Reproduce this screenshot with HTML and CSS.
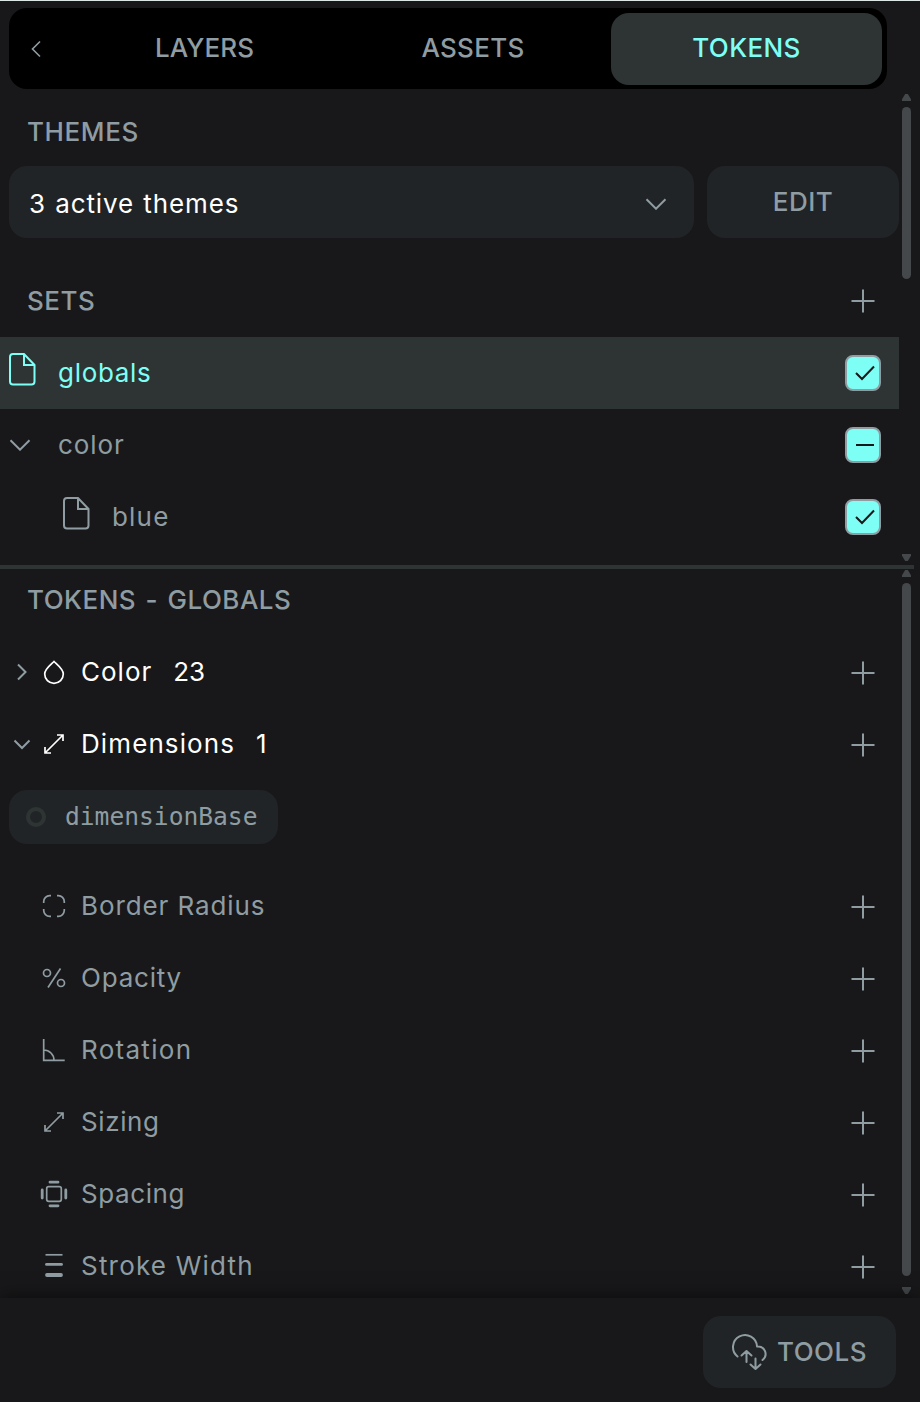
FILE: index.html
```
<!DOCTYPE html>
<html lang="en">
<head>
<meta charset="utf-8">
<title>Tokens</title>
<link rel="stylesheet" href="styles.css">
</head>
<body>
<svg class="defs" width="0" height="0">
  <symbol id="plus" viewBox="0 0 24 24"><path d="M12 .5v23M.5 12h23"/></symbol>
  <symbol id="file" viewBox="0 0 28 34"><path d="M4 2h11l10.500 11v16.500a3 3 0 0 1-3 3H4a3 3 0 0 1-3-3V5a3 3 0 0 1 3-3z M15 2v11h10.500"/></symbol>
  <symbol id="down" viewBox="0 0 22 12"><path d="M1.500 1.200L11 10.700l9.500-9.500"/></symbol>
  <symbol id="resize" viewBox="0 0 20 20"><path d="M1 19L19 1M13 1h6v6M1 13v6h6"/></symbol>
</svg>
<main class="panel">
  <nav class="tabs">
    <button class="back"><svg width="10" height="16" viewBox="0 0 10 16"><path d="M9 .5L1.500 8 9 15.500"/></svg></button>
    <button class="tab t-layers">LAYERS</button>
    <button class="tab t-assets">ASSETS</button>
    <button class="tab t-tokens active">TOKENS</button>
  </nav>

  <section class="sets">
    <h2 class="heading t-themes">THEMES</h2>
    <div class="themes">
      <div class="select"><span class="t-active">3 active themes</span><svg width="22" height="12"><use href="#down"/></svg></div>
      <button class="edit t-edit">EDIT</button>
    </div>
    <div class="sets-head"><h2 class="heading t-sets">SETS</h2><svg class="add" width="24" height="24"><use href="#plus"/></svg></div>
    <div class="set selected"><span class="set-icon"><svg width="28" height="34"><use href="#file"/></svg></span><span class="name t-globals">globals</span><span class="check"><svg width="20" height="16" viewBox="0 0 20 16"><path d="M1 8l6 6L19 1.500"/></svg></span></div>
    <div class="set"><span class="set-icon arrow"><svg width="22" height="12"><use href="#down"/></svg></span><span class="name t-color">color</span><span class="check"><svg width="20" height="16" viewBox="0 0 20 16"><path d="M1 8h18"/></svg></span></div>
    <div class="set nested"><span class="set-icon"><svg width="28" height="34"><use href="#file"/></svg></span><span class="name t-blue">blue</span><span class="check"><svg width="20" height="16" viewBox="0 0 20 16"><path d="M1 8l6 6L19 1.500"/></svg></span></div>
    <div class="scroll"><i class="up"></i><i class="thumb short"></i><i class="dn"></i></div>
  </section>

  <section class="tokens">
    <h2 class="heading t-tg">TOKENS - GLOBALS</h2>
    <div class="row open"><span class="fold"><svg width="10" height="16" viewBox="0 0 10 16"><path d="M1 .5L8.500 8 1 15.500"/></svg></span><span class="icon"><svg width="22" height="24" viewBox="0 0 22 24"><path d="M11 1.500C8 4.500 1.700 9 1.700 14a9.300 9.300 0 0 0 18.600 0C20.300 9 14 4.500 11 1.500z"/></svg></span><span class="label t-Color">Color</span><span class="count t-23">23</span><svg class="add" width="24" height="24"><use href="#plus"/></svg></div>
    <div class="row open"><span class="fold"><svg width="16" height="9" viewBox="0 0 16 9"><path d="M.5 .5L8 8l7.500-7.500"/></svg></span><span class="icon"><svg width="20" height="20"><use href="#resize"/></svg></span><span class="label t-dim">Dimensions</span><span class="count t-1">1</span><svg class="add" width="24" height="24"><use href="#plus"/></svg></div>
    <div class="pill"><i class="ring"></i><span>dimensionBase</span></div>
    <div class="row"><span class="fold"></span><span class="icon"><svg width="24" height="24" viewBox="0 0 24 24"><path d="M1.700 9V7.700a6 6 0 0 1 6-6H9M15 1.700h1.300a6 6 0 0 1 6 6V9M22.300 15v1.300a6 6 0 0 1-6 6H15M9 22.300H7.700a6 6 0 0 1-6-6V15"/></svg></span><span class="label t-border">Border Radius</span><svg class="add" width="24" height="24"><use href="#plus"/></svg></div>
    <div class="row"><span class="fold"></span><span class="icon"><svg width="24" height="24" viewBox="0 0 24 24"><path d="M18.500 2.500L6 21.500"/><circle cx="5" cy="7" r="3.500"/><circle cx="19" cy="17" r="3.500"/></svg></span><span class="label t-op">Opacity</span><svg class="add" width="24" height="24"><use href="#plus"/></svg></div>
    <div class="row"><span class="fold"></span><span class="icon"><svg width="24" height="24" viewBox="0 0 24 24"><path d="M1.700 1v21.300h21M1.700 12a10.300 10.300 0 0 1 10.300 10.300"/></svg></span><span class="label t-rot">Rotation</span><svg class="add" width="24" height="24"><use href="#plus"/></svg></div>
    <div class="row"><span class="fold"></span><span class="icon"><svg width="20" height="20"><use href="#resize"/></svg></span><span class="label t-size">Sizing</span><svg class="add" width="24" height="24"><use href="#plus"/></svg></div>
    <div class="row"><span class="fold"></span><span class="icon"><svg width="28" height="28" viewBox="0 0 28 28"><rect x="6.700" y="6.700" width="14.600" height="14.600" rx="2"/><path class="thick" d="M10 2.200h8M10 25.800h8M2.200 10v8M25.800 10v8"/></svg></span><span class="label t-space">Spacing</span><svg class="add" width="24" height="24"><use href="#plus"/></svg></div>
    <div class="row"><span class="fold"></span><span class="icon"><svg width="20" height="26" viewBox="0 0 20 26"><path d="M1.500 1.800h17"/><path class="thick" d="M2.500 11.400h15"/><path class="thicker" d="M3 22h14"/></svg></span><span class="label t-stroke">Stroke Width</span><svg class="add" width="24" height="24"><use href="#plus"/></svg></div>
    <div class="scroll"><i class="up"></i><i class="thumb"></i><i class="dn"></i></div>
  </section>

  <footer class="footer">
    <button class="tools"><svg width="36" height="36" viewBox="0 0 36 36"><path class="cloud" d="M4.500 22.500A12 12 0 1 1 24 12.500c8-.5 11.500 8.500 5.500 13.500"/><path class="cloud" d="M13.500 28V17M8.500 21.500l5-4.500 5 4.500M22.500 24.500V35M17.500 30.500l5 4.500 5-4.500"/></svg><span class="t-tools">TOOLS</span></button>
  </footer>
</main>
</body>
</html>
```
FILE: styles.css
```
* { box-sizing: border-box; }
body { margin: 0; background: #18181a; color: #8f9da3; font: 26px/30px Inter, "Liberation Sans", sans-serif; }
button { border: 0; padding: 0; background: none; color: inherit; font: inherit; }
svg { display: block; flex: none; fill: none; stroke: #8f9da3; stroke-width: 2; overflow: visible; }
.defs { position: absolute; }
.panel { height: 1402px; border-top: 1px solid #dfe6e6; display: flex; flex-direction: column; overflow: hidden; }
.tabs { display: flex; align-items: center; height: 81px; width: 878px; margin: 7px 0 0 9px; padding-right: 5px; border-radius: 18px; background: #000; font-weight: 500; flex: none; }
.back { width: 60px; padding-left: 22px; }
.back svg { stroke-width: 1.600; }
.tab { flex: 1; height: 72px; border-radius: 18px; padding-bottom: 2px; }
.tab.active { background: #2e3434; color: #7efff5; }
.heading { margin: 0; padding-left: 27px; font-size: 26px; line-height: 30px; font-weight: 500; white-space: nowrap; }

.sets { position: relative; height: 476px; padding-top: 28px; flex: none; }
.themes { display: flex; gap: 13px; margin: 19px 21px 0 9px; height: 72px; }
.select { flex: 1; display: flex; align-items: center; justify-content: space-between; padding: 4px 27px 0 20px; border-radius: 18px; background: #212426; color: #fff; }
.edit { width: 192px; border-radius: 18px; background: #212426; font-weight: 500; }
.sets-head { display: flex; align-items: center; justify-content: space-between; height: 72px; margin-top: 27px; padding-right: 45px; }
.set { display: flex; align-items: center; width: 899px; height: 72px; padding-right: 18px; }
.nested { padding-left: 54px; }
.set-icon { width: 58px; padding: 0 0 9px 9px; }
.set-icon.arrow { padding: 0 0 0 9px; }
.name { flex: 1; }
.selected { background: #2e3434; color: #7efff5; }
.selected .set-icon svg { stroke: #7efff5; }
.check { width: 36px; height: 36px; border: 2px solid #8f9da3; border-radius: 8px; background: #7efff5; display: flex; align-items: center; justify-content: center; padding-left: 3px; }
.check svg { stroke: #18181a; }

.tokens { position: relative; width: 914px; height: 733px; border-top: 4px solid #2e3434; padding-top: 16px; overflow: hidden; flex: none; }
.tokens > .heading { margin-bottom: 22px; }
.row { display: flex; align-items: center; height: 72px; padding: 0 39px 2px 0; }
.row .add { margin: 2px 0 0 auto; }
.open { color: #fff; }
.fold { width: 26px; margin: 0 1px 0 9px; display: flex; justify-content: center; }
.icon { width: 36px; display: flex; justify-content: center; }
.open .icon svg { stroke: #fff; }
.label { margin-left: 9px; white-space: nowrap; }
.count { margin-left: 21px; }
.row svg { stroke-width: 1.700; }
.row .fold svg { stroke-width: 2; }
.row .add { stroke-width: 2; }
.row .thick { stroke-width: 2.800; stroke-linecap: round; }
.row .thicker { stroke-width: 3.800; stroke-linecap: round; }
.pill { display: flex; align-items: center; width: 269px; height: 54px; margin: 9px 0 27px 9px; padding-left: 17px; border-radius: 18px; background: #212426; font: 24.600px/30px "DejaVu Sans Mono", monospace; }
.ring { width: 20px; height: 20px; border: 4px solid #2e3434; border-radius: 50%; margin-right: 19px; }

/* Tracking per label */
.t-layers { letter-spacing: .1px; }
.t-assets { letter-spacing: .3px; text-indent: -5px; }
.t-tokens { letter-spacing: .400px; }
.t-themes { letter-spacing: .600px; }
.t-active { letter-spacing: .9px; word-spacing: 1px; }
.t-edit { letter-spacing: .5px; }
.t-sets { letter-spacing: .500px; }
.t-globals { letter-spacing: .700px; }
.t-color { letter-spacing: .9px; }
.t-blue { letter-spacing: 1.2px; }
.t-tg { letter-spacing: .5px; word-spacing: 2px; }
.t-Color { letter-spacing: 1px; }
.t-23 { letter-spacing: 0; }
.t-dim { letter-spacing: 1.1px; }
.t-border { letter-spacing: .9px; }
.t-op { letter-spacing: .8px; }
.t-rot { letter-spacing: 1.3px; }
.t-size { letter-spacing: .6px; }
.t-space { letter-spacing: .6px; }
.t-stroke { letter-spacing: 1.2px; }
.t-tools { letter-spacing: .5px; }

.scroll { position: absolute; top: 5px; bottom: 4px; left: 902px; width: 9px; display: flex; flex-direction: column; }
.tokens .scroll { top: 1px; }
.up, .dn { width: 9px; height: 7px; background: #44484a; }
.up { clip-path: polygon(35% 0, 65% 0, 100% 75%, 100% 100%, 0 100%, 0 75%); }
.dn { clip-path: polygon(0 0, 100% 0, 100% 25%, 65% 100%, 35% 100%, 0 25%); margin-top: auto; }
.thumb { flex: 1; margin: 6px 0 11px; border-radius: 5px; background: #44484a; }
.thumb.short { flex: none; height: 172px; }

.footer { flex: 1; display: flex; justify-content: flex-end; padding: 18px 24px 14px 0; box-shadow: 0 0 18px #0009; z-index: 1; background: #18181a; }
.tools { display: flex; align-items: center; width: 193px; height: 72px; padding-left: 30px; gap: 8px; border-radius: 18px; background: #212426; font-weight: 500; }
.cloud { stroke-linecap: round; stroke-linejoin: round; }
```
